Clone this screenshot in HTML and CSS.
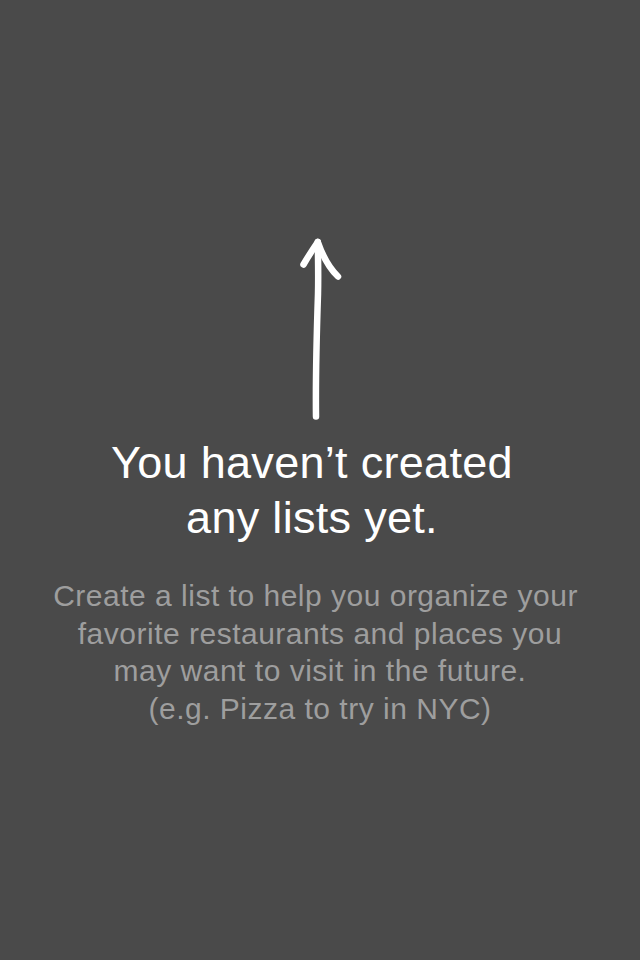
FILE: index.html
```html
<!DOCTYPE html>
<html lang="en">
<head>
<meta charset="utf-8">
<title>Lists</title>
<link rel="stylesheet" href="styles.css">
</head>
<body>
<main class="empty">
  <svg class="arrow" width="60" height="190" viewBox="0 0 60 190" aria-hidden="true">
    <path d="M26 182.5 C 25.5 140, 27 90, 28 60 C 28.5 40, 28 22, 27.8 8" />
    <path d="M13.5 30.5 C 18.5 22, 23 15, 27.8 8 C 32 20, 38 33, 48 42.5" />
  </svg>
  <h1 class="title">You haven’t created<br>any lists yet.</h1>
  <p class="subtitle">Create a list to help you organize your&nbsp;<br>favorite restaurants and places you<br>may want to visit in the future.<br>(e.g. Pizza to try in NYC)</p>
</main>
</body>
</html>
```

FILE: styles.css
```css
html, body {
  margin: 0;
  padding: 0;
  background: #4a4a4a;
}

body {
  width: 640px;
  height: 960px;
  font-family: "Liberation Sans", Arial, sans-serif;
}

.empty {
  display: flex;
  flex-direction: column;
  align-items: center;
  padding-top: 234px;
}

.arrow {
  display: block;
}

.arrow path {
  fill: none;
  stroke: #ffffff;
  stroke-width: 6.5;
  stroke-linecap: round;
  stroke-linejoin: round;
}

.title {
  margin: 11px 0 0;
  padding-right: 16px;
  font-size: 45px;
  line-height: 55px;
  font-weight: normal;
  letter-spacing: 0.3px;
  color: #ffffff;
  text-align: center;
}

.subtitle {
  margin: 32px 0 0;
  font-size: 30px;
  line-height: 37.5px;
  letter-spacing: 0.5px;
  color: #9e9e9e;
  text-align: center;
}
```
